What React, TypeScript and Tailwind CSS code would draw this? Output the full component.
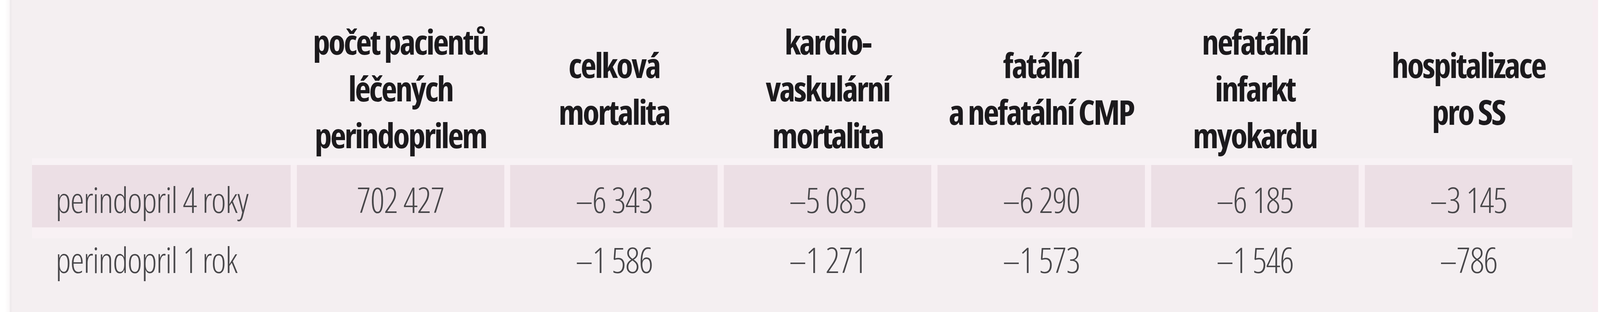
import React from "react";

const headers: string[][] = [
  [],
  ["počet pacientů", "léčených", "perindoprilem"],
  ["celková", "mortalita"],
  ["kardio-", "vaskulární", "mortalita"],
  ["fatální", "a nefatální CMP"],
  ["nefatální", "infarkt", "myokardu"],
  ["hospitalizace", "pro SS"],
];

const row1 = ["perindopril 4 roky", "702 427", "–6 343", "–5 085", "–6 290", "–6 185", "–3 145"];
const row2 = ["perindopril 1 rok", "", "–1 586", "–1 271", "–1 573", "–1 546", "–786"];

const grid = "grid grid-cols-[920fr_repeat(6,738fr)] gap-x-[0.4015%]";
const bodyText =
  "whitespace-nowrap text-[90px] font-light leading-[108px] tracking-[-0.02em] text-[#48474a]";

export default function App() {
  return (
    <div className="flex h-[800px] w-full overflow-hidden font-['Open_Sans',sans-serif] [font-stretch:75%]">
      <div className="w-[0.615%] shrink-0 bg-linear-to-r from-white via-white to-[#f9f6f7]" />
      <div className="w-[0.123%] shrink-0 bg-[#efebed]" />
      <div className="min-w-0 flex-1 bg-[#f4eff1] pl-[1.2627%]">
        <div className="w-[98.7%]">
          {/* header */}
          <div className={`${grid} h-[406px] items-center pt-[46px]`}>
            {headers.map((lines, i) => (
              <div
                key={i}
                className="whitespace-nowrap text-center text-[88px] font-bold leading-[120px] tracking-[-0.045em] text-[#1c1a1d]"
              >
                {lines.map((l, j) => (
                  <div key={j}>{l}</div>
                ))}
              </div>
            ))}
          </div>
          <div className="h-[17px] bg-[#f8f2f5]" />
          {/* row 1 */}
          <div className={`${grid} h-[160px] bg-[#f8eff3]`}>
            {row1.map((v, i) => (
              <div
                key={i}
                className={`${bodyText} bg-[#ecdfe5] pt-[34px] ${i === 0 ? "pl-[9.13%]" : "text-center"}`}
              >
                {v}
              </div>
            ))}
          </div>
          <div className="h-[28px] bg-[#f8f1f4]" />
          {/* row 2 */}
          <div className={`${grid} h-[108px]`}>
            {row2.map((v, i) => (
              <div key={i} className={`${bodyText} ${i === 0 ? "pl-[9.13%]" : "text-center"}`}>
                {v}
              </div>
            ))}
          </div>
        </div>
      </div>
      <div className="w-[0.351%] shrink-0 bg-[#f7edf1]" />
      <div className="w-[0.123%] shrink-0 bg-white" />
    </div>
  );
}
